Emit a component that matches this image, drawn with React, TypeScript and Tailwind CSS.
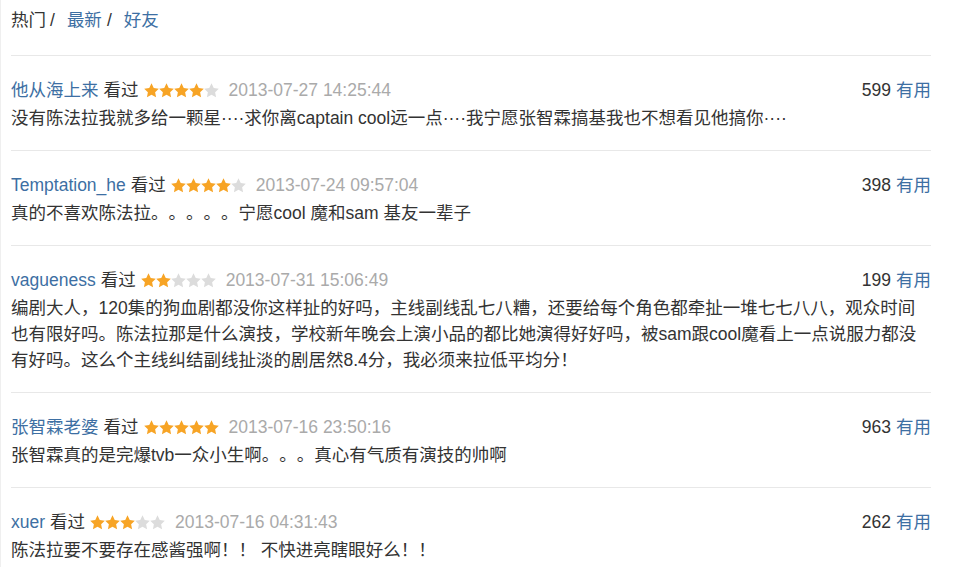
import React from "react";

interface Comment {
    name: string,
    rating: number,
    time: string,
    votes: number,
    text: string
}

const comments: Comment[] = [
    { name: "他从海上来", rating: 4, time: "2013-07-27 14:25:44", votes: 599, text: "没有陈法拉我就多给一颗星····求你离captain cool远一点····我宁愿张智霖搞基我也不想看见他搞你····" },
    { name: "Temptation_he", rating: 4, time: "2013-07-24 09:57:04", votes: 398, text: "真的不喜欢陈法拉。。。。。宁愿cool 魔和sam 基友一辈子" },
    { name: "vagueness", rating: 2, time: "2013-07-31 15:06:49", votes: 199, text: "编剧大人，120集的狗血剧都没你这样扯的好吗，主线副线乱七八糟，还要给每个角色都牵扯一堆七七八八，观众时间也有限好吗。陈法拉那是什么演技，学校新年晚会上演小品的都比她演得好好吗，被sam跟cool魔看上一点说服力都没有好吗。这么个主线纠结副线扯淡的剧居然8.4分，我必须来拉低平均分！" },
    { name: "张智霖老婆", rating: 5, time: "2013-07-16 23:50:16", votes: 963, text: "张智霖真的是完爆tvb一众小生啊。。。真心有气质有演技的帅啊" },
    { name: "xuer", rating: 3, time: "2013-07-16 04:31:43", votes: 262, text: "陈法拉要不要存在感酱强啊！！ 不快进亮瞎眼好么！！" },
]

function Star({ on }: { on: boolean }) {
    return (
        <svg width="15" height="15" viewBox="0 0 24 24" className="block">
            <path
                d="M12 0.5l3.6 7.4 8.1 1.1-5.9 5.7 1.5 8.1L12 18.9l-7.3 3.9 1.5-8.1L0.3 9l8.1-1.1z"
                fill={on ? "#f7a425" : "#dcdcdc"}
            />
        </svg>
    )
}

function Stars({ n }: { n: number }) {
    return (
        <span className="inline-flex items-center mx-[5px]">
            {[0, 1, 2, 3, 4].map((i) => <Star key={i} on={i < n} />)}
        </span>
    )
}

export default function App() {
    return (
        <div
            className="w-[956px] h-[567px] overflow-hidden bg-white border-l border-[#efefef] text-[17.5px] leading-[26px] text-[#333] [text-spacing-trim:space-all]"
            style={{ fontFamily: '"Liberation Sans", Arial, "Noto Sans CJK SC", sans-serif' }}
        >
            <div className="pl-[10px] pr-[25px]">
                <div className="pt-[7px] pb-[22px] flex items-center">
                    <span>热门</span>
                    <span className="ml-[4px] mr-[12px]">/</span>
                    <a className="text-[#3d6fa3]">最新</a>
                    <span className="ml-[5px] mr-[12px]">/</span>
                    <a className="text-[#3d6fa3]">好友</a>
                </div>

                {comments.map((c, index) => (
                    <div key={index + "comment"} className="border-t border-[#e8e8e8] pt-[21px] pb-[19px]">
                        <div className="flex items-center justify-between">
                            <div className="flex items-center">
                                <a className="text-[#3d6fa3]">{c.name}</a>
                                <span className="ml-[5px]">看过</span>
                                <Stars n={c.rating} />
                                <span className="ml-[5px] text-[#aaa]">{c.time}</span>
                            </div>
                            <div>
                                <span>{c.votes}</span>
                                <a className="ml-[5px] text-[#3d6fa3]">有用</a>
                            </div>
                        </div>
                        <p className="mt-[2px] pr-[5px]">{c.text}</p>
                    </div>
                ))}
            </div>
        </div>
    )
}
